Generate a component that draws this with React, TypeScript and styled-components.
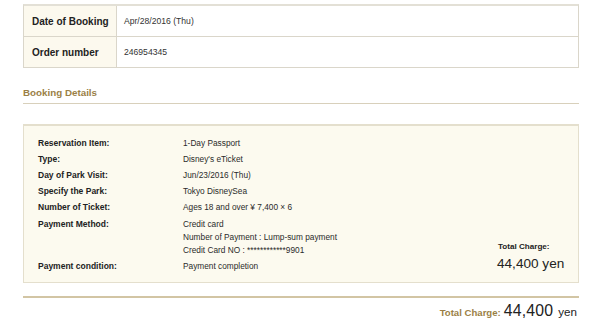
import { Fragment } from "react";
import styled, { createGlobalStyle } from "styled-components";

const GlobalStyle = createGlobalStyle`
  body {
    margin: 0;
    background: #fff;
    font-family: "Liberation Sans", Arial, sans-serif;
    color: #333;
  }
`

const Page = styled.div`
  width: 600px;
  box-sizing: border-box;
  padding: 4px 21px 0 23px;
`

const InfoTable = styled.div`
  display: grid;
  grid-template-columns: 93px 1fr;
  border: 1px solid #dad6ca;
  border-top-width: 2px;
  border-top-color: #e3e0d6;
`

const InfoLabel = styled.div<{ $last?: boolean }>`
  height: 30px;
  display: flex;
  align-items: center;
  padding-left: 8px;
  background: #fcf9ee;
  border-right: 1px solid #dad6ca;
  border-bottom: ${p => (p.$last ? "none" : "1px solid #dad6ca")};
  font-size: 10px;
  font-weight: bold;
  color: #222;
`

const InfoValue = styled.div<{ $last?: boolean }>`
  height: 30px;
  display: flex;
  align-items: center;
  padding-left: 7px;
  border-bottom: ${p => (p.$last ? "none" : "1px solid #dad6ca")};
  font-size: 8.6px;
  color: #333;
`

const SectionTitle = styled.h2`
  margin: 19px 0 0;
  padding-bottom: 4px;
  border-bottom: 1px solid #d8d0bb;
  font-size: 9.8px;
  font-weight: bold;
  line-height: 12px;
  color: #9b7f46;
`

const DetailBox = styled.div`
  margin-top: 20px;
  display: flex;
  justify-content: space-between;
  padding: 9px 14px 8px 14px;
  background: #fcfaef;
  border: 1px solid #e4dfcd;
  border-top-width: 2px;
`

const DetailList = styled.div`
  display: grid;
  grid-template-columns: 145px auto;
  align-content: start;
`

const DetailLabel = styled.div`
  padding: 1.6px 0;
  font-size: 8.5px;
  line-height: 13px;
  font-weight: bold;
  color: #222;
`

const DetailValue = styled.div`
  padding: 1.6px 0;
  font-size: 8.3px;
  line-height: 13px;
  color: #2a2a2a;
`

const BoxTotal = styled.div`
  align-self: flex-end;
  display: flex;
  flex-direction: column;
  width: 66px;
`

const BoxTotalLabel = styled.div`
  font-size: 8.1px;
  font-weight: bold;
  color: #222;
  line-height: 12px;
`

const BoxTotalAmount = styled.div`
  font-size: 13.6px;
  color: #222;
  line-height: 21px;
  white-space: nowrap;
  margin-left: -1px;
`

const Divider = styled.div`
  margin-top: 13px;
  height: 2px;
  background: #d2c5a4;
`

const GrandTotal = styled.div`
  display: flex;
  justify-content: flex-end;
  align-items: baseline;
  gap: 3px;
  padding-top: 4px;
  padding-right: 2px;
  white-space: nowrap;
`

const GrandLabel = styled.span`
  font-size: 9.6px;
  font-weight: bold;
  color: #9b7f46;
`

const GrandAmount = styled.span`
  font-size: 15.8px;
  color: #222;
  letter-spacing: 0.2px;
`

const GrandUnit = styled.span`
  font-size: 11.6px;
  color: #222;
  margin-left: 2px;
`

const details: [string, string[]][] = [
  ["Reservation Item:", ["1-Day Passport"]],
  ["Type:", ["Disney's eTicket"]],
  ["Day of Park Visit:", ["Jun/23/2016 (Thu)"]],
  ["Specify the Park:", ["Tokyo DisneySea"]],
  ["Number of Ticket:", ["Ages 18 and over \u00a5 7,400 \u00d7 6"]],
  ["Payment Method:", ["Credit card", "Number of Payment : Lump-sum payment", "Credit Card NO : ************9901"]],
  ["Payment condition:", ["Payment completion"]],
]

const App = () => {
  return (
    <Page>
      <GlobalStyle />
      <InfoTable>
        <InfoLabel>Date of Booking</InfoLabel>
        <InfoValue>Apr/28/2016 (Thu)</InfoValue>
        <InfoLabel $last>Order number</InfoLabel>
        <InfoValue $last>246954345</InfoValue>
      </InfoTable>

      <SectionTitle>Booking Details</SectionTitle>

      <DetailBox>
        <DetailList>
          {details.map(([label, lines]) => (
            <Fragment key={label}>
              <DetailLabel>{label}</DetailLabel>
              <DetailValue>
                {lines.map(line => (
                  <div key={line}>{line}</div>
                ))}
              </DetailValue>
            </Fragment>
          ))}
        </DetailList>
        <BoxTotal>
          <BoxTotalLabel>Total Charge:</BoxTotalLabel>
          <BoxTotalAmount>44,400 yen</BoxTotalAmount>
        </BoxTotal>
      </DetailBox>

      <Divider />
      <GrandTotal>
        <GrandLabel>Total Charge:</GrandLabel>
        <GrandAmount>44,400</GrandAmount>
        <GrandUnit>yen</GrandUnit>
      </GrandTotal>
    </Page>
  )
}

export default App
